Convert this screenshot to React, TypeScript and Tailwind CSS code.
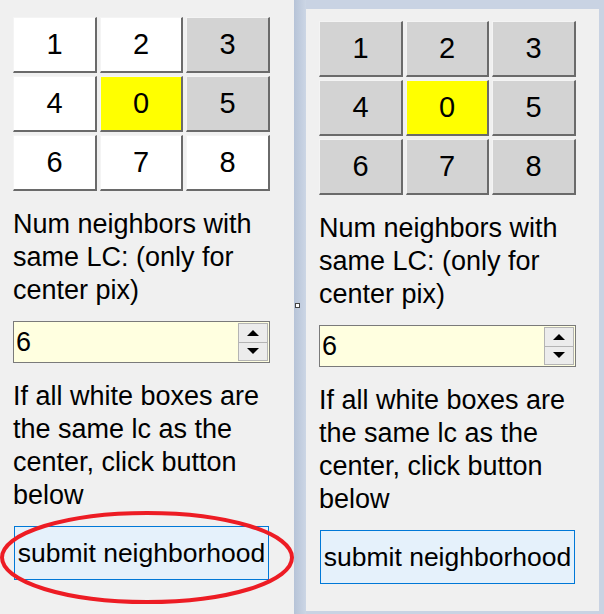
import React from 'react';

const FONT = { fontFamily: '"Liberation Sans", Arial, sans-serif' };

type Tone = 'white' | 'gray' | 'yellow';

const toneClass: Record<Tone, string> = {
  white: 'bg-white',
  gray: 'bg-[#d3d3d3]',
  yellow: 'bg-[#ffff00]',
};

function Cell({ n, tone }: { n: number; tone: Tone }) {
  return (
    <div
      className={`h-[56px] flex items-center justify-center text-[29px] text-black border-t border-l border-t-[#f4f4f4] border-l-[#f4f4f4] border-b-2 border-r-2 border-b-[#6a6a6a] border-r-[#6a6a6a] ${toneClass[tone]}`}
    >
      {n}
    </div>
  );
}

function Spinner() {
  return (
    <div className="w-[30px] flex flex-col my-[1px] mr-[1px]">
      <div className="flex-1 flex items-center justify-center bg-[#ececec] border border-[#b4b4b4]">
        <svg width="12" height="6" viewBox="0 0 12 6">
          <path d="M0 6 L6 0 L12 6 Z" fill="#000" />
        </svg>
      </div>
      <div className="flex-1 flex items-center justify-center bg-[#ececec] border border-t-0 border-[#b4b4b4]">
        <svg width="12" height="6" viewBox="0 0 12 6">
          <path d="M0 0 L12 0 L6 6 Z" fill="#000" />
        </svg>
      </div>
    </div>
  );
}

function Panel({ tones }: { tones: Tone[] }) {
  const order = [1, 2, 3, 4, 0, 5, 6, 7, 8];
  return (
    <div className="w-[258px] flex flex-col text-[27px] leading-[33px] text-black">
      <div className="grid grid-cols-[84px_83px_84px] gap-[3px]">
        {order.map((n, i) => (
          <Cell key={n} n={n} tone={tones[i]} />
        ))}
      </div>

      <p className="mt-[17px]">Num neighbors with same LC: (only for center pix)</p>

      <div className="mt-[14px] w-[257px] h-[42px] flex border border-[#7a7a7a] bg-[#ffffe0]">
        <div className="flex-1 flex items-center pl-[2px]">6</div>
        <Spinner />
      </div>

      <p className="mt-[17px]">If all white boxes are the same lc as the center, click button below</p>

      <button className="mt-[14px] ml-[1px] w-[255px] h-[54px] flex items-center justify-center border border-[#0078d7] bg-[#e5f1fb] text-[26.5px] whitespace-nowrap">
        submit neighborhood
      </button>
    </div>
  );
}

export default function App() {
  const leftTones: Tone[] = ['white', 'white', 'gray', 'white', 'yellow', 'gray', 'white', 'white', 'white'];
  const rightTones: Tone[] = ['gray', 'gray', 'gray', 'gray', 'yellow', 'gray', 'gray', 'gray', 'gray'];

  return (
    <div className="relative w-[604px] h-[614px] flex overflow-hidden" style={FONT}>
      {/* left window */}
      <div className="w-[294px] h-full bg-[#f0f0f0] pl-[13px] pt-[17px]">
        <Panel tones={leftTones} />
      </div>

      {/* splitter */}
      <div className="relative w-[12px] h-full bg-gradient-to-r from-[#b6c3d7] to-[#ccd6e5]">
        <div className="absolute left-[1px] top-[303px] w-[5px] h-[5px] bg-white border border-[#444]" />
      </div>

      {/* right window */}
      <div className="flex-1 h-full bg-[#c9d3e3] pt-[9px] pr-[5px] pb-[3px]">
        <div className="h-full bg-[#f0f0f0] pl-[13px] pt-[12px]">
          <Panel tones={rightTones} />
        </div>
      </div>

      {/* red annotation */}
      <svg className="absolute left-0 top-0 pointer-events-none" width="604" height="614">
        <ellipse cx="147" cy="557.5" rx="145" ry="44.5" fill="none" stroke="#ed1c24" strokeWidth="4" />
      </svg>
    </div>
  );
}
